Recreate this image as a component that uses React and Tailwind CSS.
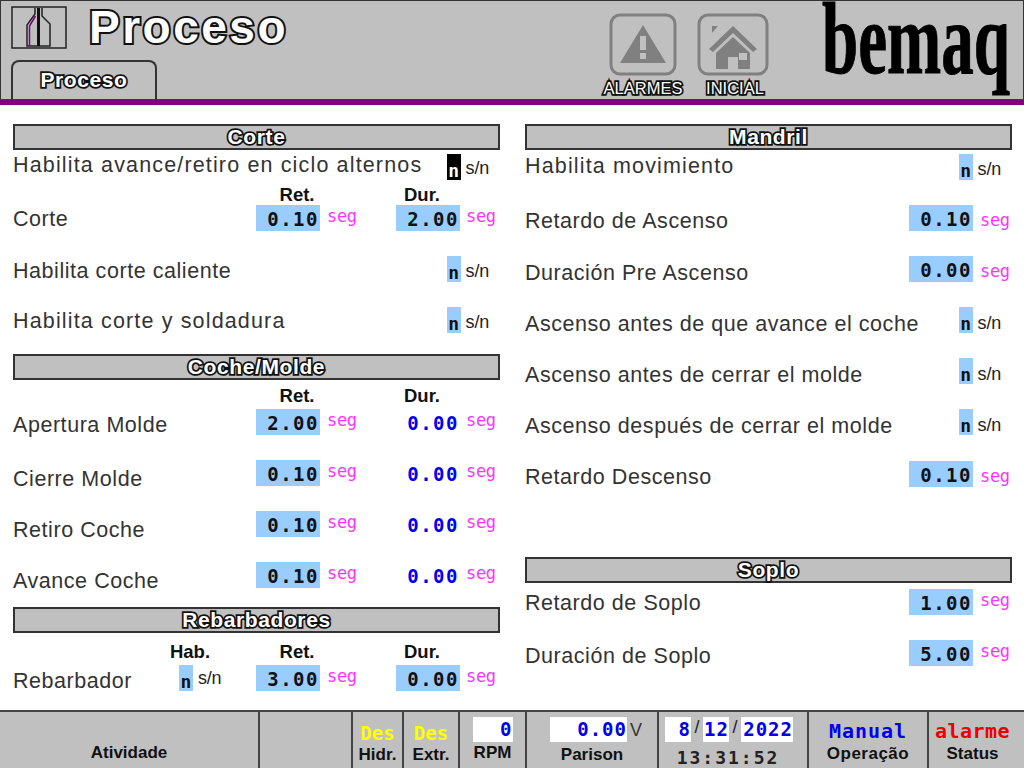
const sans = "font-['Liberation_Sans',Arial,sans-serif]";
const mono = "font-['DejaVu_Sans_Mono','Liberation_Mono',monospace]";
const outlined =
  "font-['Liberation_Sans',Arial,sans-serif] text-white [paint-order:stroke_fill] [-webkit-text-stroke:3.5px_#111]";

function SectionHeader({ title, className = "" }) {
  return (
    <div
      className={`h-[26px] border-2 border-[#333] bg-[#c0c0c0] flex items-center justify-center pb-0.5 ${className}`}
    >
      <span className={`${outlined} font-bold text-[21px] tracking-[0.6px] leading-none`}>{title}</span>
    </div>
  );
}

// algunos textos del panel salen mas anchos, por eso "wide"
function Label({ children, wide = false, className = "" }) {
  return (
    <span
      className={`pt-1 text-[21.5px] leading-none text-[#333] whitespace-nowrap ${
        wide ? "tracking-[1.15px]" : "tracking-[0.55px]"
      } ${className}`}
    >
      {children}
    </span>
  );
}

// campo de valor azul claro
function Value({ value, blue = false }) {
  return (
    <div
      className={`w-16 h-[26px] flex items-center justify-end pr-px pt-0.5 ${mono} font-bold text-[19px] tracking-[1.5px] ${
        blue ? "text-[#0000ee]" : "bg-[#99ccff] text-[#111]"
      }`}
    >
      {value}
    </div>
  );
}

function Seg({ className = "-mt-1" }) {
  return (
    <span className={`${mono} text-[#ff33ff] text-[17px] leading-none tracking-[-0.3px] ${className}`}>
      seg
    </span>
  );
}

function Toggle({ active = false, snClass = "mt-1", className = "" }) {
  return (
    <div className={`flex items-center ${className}`}>
      <div
        className={`w-3.5 h-[26px] flex items-end justify-center ${mono} font-bold text-[18px] leading-none ${
          active ? "bg-black text-white" : "bg-[#99ccff] text-[#111]"
        }`}
      >
        n
      </div>
      <span className={`ml-[5px] text-[18px] leading-none tracking-[-0.2px] text-[#222] ${snClass}`}>s/n</span>
    </div>
  );
}

function ToggleRow({ label, active, wide, labelClass = "", snClass, className = "" }) {
  return (
    <div className={`h-[26px] flex items-center ${className}`}>
      <Label wide={wide} className={labelClass}>
        {label}
      </Label>
      <Toggle active={active} snClass={snClass} className="ml-auto mr-[11px]" />
    </div>
  );
}

function ColHeads({ className = "" }) {
  return (
    <div
      className={`grid grid-cols-[252px_64px_61px_64px] text-[18.5px] font-bold leading-none text-[#111] ${className}`}
    >
      <span className="col-start-2 text-center">Ret.</span>
      <span className="col-start-4 text-center">Dur.</span>
    </div>
  );
}

function TimeRow({ label, ret, dur, blueDur = false, labelClass = "", className = "" }) {
  return (
    <div className={`h-[26px] grid grid-cols-[243px_64px_76px_64px_40px] grid-rows-[26px] items-center ${className}`}>
      <Label className={labelClass}>{label}</Label>
      <Value value={ret} />
      <span className="pl-[7px] flex items-center h-full">
        <Seg />
      </span>
      <Value value={dur} blue={blueDur} />
      <span className="pl-1.5 flex items-center h-full">
        <Seg />
      </span>
    </div>
  );
}

function ValueRow({ label, value, labelClass = "", segClass = "mt-1", className = "" }) {
  return (
    <div className={`h-[26px] flex items-center ${className}`}>
      <Label className={labelClass}>{label}</Label>
      <div className="ml-auto flex items-center w-[103px]">
        <Value value={value} />
        <span className="pl-[7px] flex items-center h-full">
          <Seg className={segClass} />
        </span>
      </div>
    </div>
  );
}

function Cell({ children, className = "" }) {
  return (
    <div className={`border-r-2 border-[#444] flex flex-col items-center min-w-0 ${className}`}>
      {children}
    </div>
  );
}

function FootLabel({ children, className = "" }) {
  return (
    <span className={`text-[17px] font-bold leading-none text-[#111] ${className}`}>
      {children}
    </span>
  );
}

function WhiteBox({ children, className = "" }) {
  return (
    <div
      className={`h-[25px] bg-white flex items-center justify-end ${mono} font-bold text-[19px] tracking-[1px] text-[#0000ee] ${className}`}
    >
      {children}
    </div>
  );
}

function BottleIcon() {
  return (
    <svg viewBox="0 0 56 43" className="w-14 h-[43px] block">
      <rect x="1" y="1" width="54" height="41" fill="#c0c0c0" stroke="#222" strokeWidth="1.5" />
      <path d="M24 2 V8 L16 19 V40 H39 V18 L31 10 V2" fill="none" stroke="#222" strokeWidth="1.5" />
      <path d="M18.5 40 V20 L24.5 10" fill="none" stroke="#800080" strokeWidth="1.5" />
      <rect x="26" y="2" width="3" height="38" fill="#111" />
    </svg>
  );
}

function AlarmIcon() {
  return (
    <svg viewBox="0 0 68 63" className="w-[68px] h-[63px] block">
      <rect x="2" y="2" width="64" height="59" rx="9" fill="none" stroke="#808080" strokeWidth="3" />
      <path d="M34 12 L57 50 H11 Z" fill="#808080" />
      <rect x="31" y="23" width="6" height="14" fill="#c0c0c0" />
      <rect x="31" y="40" width="6" height="6" fill="#c0c0c0" />
    </svg>
  );
}

function HomeIcon() {
  return (
    <svg viewBox="0 0 72 63" className="w-[72px] h-[63px] block">
      <rect x="2" y="2" width="68" height="59" rx="9" fill="none" stroke="#808080" strokeWidth="3" />
      <path d="M15 13 H21 L15 20 Z" fill="#808080" />
      <path d="M12 36 L36 13 L60 36 L56 39 L36 20 L16 39 Z" fill="#808080" />
      <path d="M19 40 L36 24 L53 40 V56 H41 V44 H31 V56 H19 Z" fill="#808080" />
      <rect x="42" y="40" width="8" height="7" fill="#c0c0c0" />
    </svg>
  );
}

function Logo() {
  return (
    <svg viewBox="0 0 190 98" className="w-[190px] h-[98px] block">
      <text
        x="0"
        y="72"
        fontFamily="'Liberation Serif', serif"
        fontWeight="bold"
        fontSize="102"
        textLength="188"
        lengthAdjust="spacingAndGlyphs"
        fill="#000"
        stroke="#000"
        strokeWidth="1"
      >
        bemaq
      </text>
    </svg>
  );
}

export default function App() {
  return (
    <div className={`w-[1024px] h-[768px] overflow-hidden flex flex-col bg-white ${sans}`}>
      {/* cabecera */}
      <header className="h-[99px] shrink-0 bg-[#c0c0c0] border border-b-0 border-[#333] flex">
        <div className="w-[500px] shrink-0 flex flex-col pl-2.5 pt-1">
          <div className="flex items-center h-11">
            <BottleIcon />
            <span className={`${outlined} [-webkit-text-stroke:4px_#111] ml-[22px] font-bold text-[46px] leading-[48px] tracking-[2.5px]`}>
              Proceso
            </span>
          </div>
          <div className="mt-auto w-[146px] h-[39px] border-2 border-b-0 border-[#333] rounded-t-lg flex items-center justify-center pb-0.5">
            <span className={`${outlined} font-bold text-[21px] tracking-[0.6px] leading-none`}>Proceso</span>
          </div>
        </div>
        <div className="ml-[102px] flex gap-[14px] pt-3">
          <div className="w-20 flex flex-col items-center">
            <AlarmIcon />
            <span className={`${outlined} [-webkit-text-stroke:2.5px_#111] mt-1 text-[16.5px] leading-none`}>ALARMES</span>
          </div>
          <div className="w-[72px] flex flex-col items-center">
            <HomeIcon />
            <span className={`${outlined} [-webkit-text-stroke:2.5px_#111] mt-1 ml-1 text-[16.5px] leading-none`}>INICIAL</span>
          </div>
        </div>
        <div className="ml-[53px]">
          <Logo />
        </div>
      </header>
      <div className="h-1.5 shrink-0 bg-[#800080]" />

      {/* contenido */}
      <main className="flex-1 min-h-0 grid grid-cols-[487px_487px] gap-x-[25px] pl-[13px] pt-[19px] text-[#222]">
        <section className="flex flex-col">
          <SectionHeader title="Corte" />
          <ToggleRow label="Habilita avance/retiro en ciclo alternos" active wide labelClass="-mt-1.5" snClass="mt-0.5" className="mt-1" />
          <ColHeads className="h-[25px] items-center pt-1.5" />
          <TimeRow label="Corte" ret="0.10" dur="2.00" />
          <ToggleRow label="Habilita corte caliente" labelClass="mt-0.5" className="mt-[25px]" />
          <ToggleRow label="Habilita corte y soldadura" wide className="mt-[25px]" />
          <SectionHeader title="Coche/Molde" className="mt-[21px]" />
          <ColHeads className="h-[29px] items-end pb-1" />
          <TimeRow label="Apertura Molde" ret="2.00" dur="0.00" blueDur labelClass="mt-1" />
          <TimeRow label="Cierre Molde" ret="0.10" dur="0.00" blueDur labelClass="mt-[10px]" className="mt-[25px]" />
          <TimeRow label="Retiro Coche" ret="0.10" dur="0.00" blueDur labelClass="mt-[10px]" className="mt-[25px]" />
          <TimeRow label="Avance Coche" ret="0.10" dur="0.00" blueDur labelClass="mt-[10px]" className="mt-[25px]" />
          <SectionHeader title="Rebarbadores" className="mt-[19px]" />
          <div className="h-[32px] grid grid-cols-[155px_97px_64px_61px_64px] text-[18.5px] font-bold leading-none text-[#111] items-end pb-1">
            <span className="text-center col-start-2 w-[44px]">Hab.</span>
            <span className="text-center col-start-3">Ret.</span>
            <span className="text-center col-start-5">Dur.</span>
          </div>
          <div className="h-[26px] grid grid-cols-[166px_77px_64px_76px_64px_40px] grid-rows-[26px] items-center">
            <Label className="mt-1">Rebarbador</Label>
            <Toggle snClass="" />
            <Value value="3.00" />
            <span className="pl-[7px] flex items-center h-full">
              <Seg />
            </span>
            <Value value="0.00" />
            <span className="pl-1.5 flex items-center h-full">
              <Seg />
            </span>
          </div>
        </section>

        <section className="flex flex-col">
          <SectionHeader title="Mandril" />
          <ToggleRow label="Habilita movimiento" wide labelClass="-mt-1" className="mt-1" />
          <ValueRow label="Retardo de Ascenso" value="0.10" labelClass="mt-1" className="mt-[25px]" />
          <ValueRow label="Duración Pre Ascenso" value="0.00" labelClass="mt-[6px]" className="mt-[25px]" />
          <ToggleRow label="Ascenso antes de que avance el coche" labelClass="mt-[6px]" snClass="mt-1.5" className="mt-[25px]" />
          <ToggleRow label="Ascenso antes de cerrar el molde" labelClass="mt-[6px]" snClass="mt-1.5" className="mt-[25px]" />
          <ToggleRow label="Ascenso después de cerrar el molde" labelClass="mt-[6px]" snClass="mt-1.5" className="mt-[25px]" />
          <ValueRow label="Retardo Descenso" value="0.10" labelClass="mt-1" className="mt-[26px]" />
          <SectionHeader title="Soplo" className="mt-[70px]" />
          <ValueRow label="Retardo de Soplo" value="1.00" segClass="-mt-1" className="mt-1.5" />
          <ValueRow label="Duración de Soplo" value="5.00" labelClass="mt-1" segClass="-mt-1" className="mt-[25px]" />
        </section>
      </main>

      {/* barra inferior */}
      <footer className="h-[58px] shrink-0 bg-[#c0c0c0] border-t-2 border-[#444] grid grid-cols-[260px_93px_51px_56px_67px_132px_150px_120px_95px]">
        <Cell className="justify-end pb-[7px]">
          <FootLabel>Atividade</FootLabel>
        </Cell>
        <Cell />
        <Cell className="pt-[10px]">
          <span className={`${mono} font-bold text-[19px] leading-[22px] text-[#ffff00]`}>Des</span>
          <FootLabel className="mt-[2px] text-[16px]">Hidr.</FootLabel>
        </Cell>
        <Cell className="pt-[10px]">
          <span className={`${mono} font-bold text-[19px] leading-[22px] text-[#ffff00]`}>Des</span>
          <FootLabel className="mt-[2px] text-[16px]">Extr.</FootLabel>
        </Cell>
        <Cell className="pt-[5px]">
          <WhiteBox className="w-10">0</WhiteBox>
          <FootLabel className="mt-[2px]">RPM</FootLabel>
        </Cell>
        <Cell className="pt-[5px]">
          <div className="flex items-center self-start ml-[23px]">
            <WhiteBox className="w-[77px]">0.00</WhiteBox>
            <span className="ml-[3px] text-[18px] leading-none text-[#333]">V</span>
          </div>
          <FootLabel className="mt-1">Parison</FootLabel>
        </Cell>
        <Cell className="pt-[5px]">
          <div className="flex items-center self-start ml-[6px] text-[#222] text-[18px]">
            <WhiteBox className="w-[26px] justify-center">8</WhiteBox>
            <span className="w-3 text-center -mt-1">/</span>
            <WhiteBox className="w-[26px] justify-center">12</WhiteBox>
            <span className="w-3 text-center -mt-1">/</span>
            <WhiteBox className="w-[52px] justify-center">2022</WhiteBox>
          </div>
          <span className={`${mono} mt-[7px] mr-2.5 font-bold text-[18px] leading-none tracking-[2px] text-[#222]`}>
            13:31:52
          </span>
        </Cell>
        <Cell className="pt-[8px]">
          <span className={`${mono} font-bold text-[20px] leading-[22px] text-[#0000ee] tracking-[1px]`}>Manual</span>
          <FootLabel className="mt-[3px] tracking-[0.5px]">Operação</FootLabel>
        </Cell>
        <div className="flex flex-col items-center pt-[8px] pr-2">
          <span className={`${mono} font-bold text-[20px] leading-[22px] text-[#ee0000] tracking-[0.5px]`}>alarme</span>
          <FootLabel className="mt-[3px]">Status</FootLabel>
        </div>
      </footer>
    </div>
  );
}
